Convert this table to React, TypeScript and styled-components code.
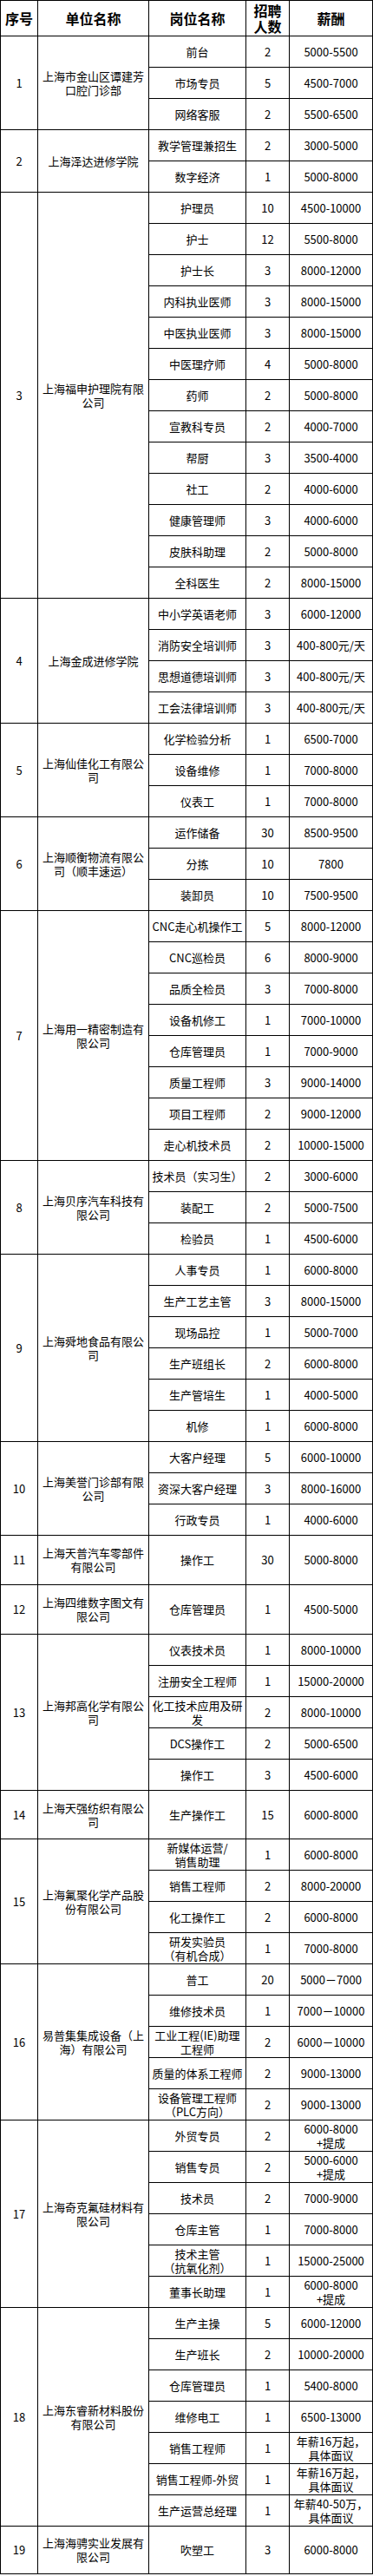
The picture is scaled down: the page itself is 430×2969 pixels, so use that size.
import React from "react";
import styled, { createGlobalStyle } from "styled-components";

type Job = [string, string, string];

type Company = {
  no: number;
  name: string;
  jobs: Job[];
  height?: number;
};

const companies: Company[] = [
  {
    no: 1,
    name: "上海市金山区谭建芳\n口腔门诊部",
    jobs: [
      ["前台", "2", "5000-5500"],
      ["市场专员", "5", "4500-7000"],
      ["网络客服", "2", "5500-6500"],
    ],
  },
  {
    no: 2,
    name: "上海泽达进修学院",
    jobs: [
      ["教学管理兼招生", "2", "3000-5000"],
      ["数字经济", "1", "5000-8000"],
    ],
  },
  {
    no: 3,
    name: "上海福申护理院有限\n公司",
    jobs: [
      ["护理员", "10", "4500-10000"],
      ["护士", "12", "5500-8000"],
      ["护士长", "3", "8000-12000"],
      ["内科执业医师", "3", "8000-15000"],
      ["中医执业医师", "3", "8000-15000"],
      ["中医理疗师", "4", "5000-8000"],
      ["药师", "2", "5000-8000"],
      ["宣教科专员", "2", "4000-7000"],
      ["帮厨", "3", "3500-4000"],
      ["社工", "2", "4000-6000"],
      ["健康管理师", "3", "4000-6000"],
      ["皮肤科助理", "2", "5000-8000"],
      ["全科医生", "2", "8000-15000"],
    ],
  },
  {
    no: 4,
    name: "上海金成进修学院",
    jobs: [
      ["中小学英语老师", "3", "6000-12000"],
      ["消防安全培训师", "3", "400-800元/天"],
      ["思想道德培训师", "3", "400-800元/天"],
      ["工会法律培训师", "3", "400-800元/天"],
    ],
  },
  {
    no: 5,
    name: "上海仙佳化工有限公\n司",
    jobs: [
      ["化学检验分析", "1", "6500-7000"],
      ["设备维修", "1", "7000-8000"],
      ["仪表工", "1", "7000-8000"],
    ],
  },
  {
    no: 6,
    name: "上海顺衡物流有限公\n司（顺丰速运）",
    jobs: [
      ["运作储备", "30", "8500-9500"],
      ["分拣", "10", "7800"],
      ["装卸员", "10", "7500-9500"],
    ],
  },
  {
    no: 7,
    name: "上海用一精密制造有\n限公司",
    jobs: [
      ["CNC走心机操作工", "5", "8000-12000"],
      ["CNC巡检员", "6", "8000-9000"],
      ["品质全检员", "3", "7000-8000"],
      ["设备机修工", "1", "7000-10000"],
      ["仓库管理员", "1", "7000-9000"],
      ["质量工程师", "3", "9000-14000"],
      ["项目工程师", "2", "9000-12000"],
      ["走心机技术员", "2", "10000-15000"],
    ],
  },
  {
    no: 8,
    name: "上海贝序汽车科技有\n限公司",
    jobs: [
      ["技术员（实习生）", "2", "3000-6000"],
      ["装配工", "2", "5000-7500"],
      ["检验员", "1", "4500-6000"],
    ],
  },
  {
    no: 9,
    name: "上海舜地食品有限公\n司",
    jobs: [
      ["人事专员", "1", "6000-8000"],
      ["生产工艺主管", "3", "8000-15000"],
      ["现场品控", "1", "5000-7000"],
      ["生产班组长", "2", "6000-8000"],
      ["生产管培生", "1", "4000-5000"],
      ["机修", "1", "6000-8000"],
    ],
  },
  {
    no: 10,
    name: "上海美誉门诊部有限\n公司",
    jobs: [
      ["大客户经理", "5", "6000-10000"],
      ["资深大客户经理", "3", "8000-16000"],
      ["行政专员", "1", "4000-6000"],
    ],
  },
  {
    no: 11,
    name: "上海天普汽车零部件\n有限公司",
    jobs: [["操作工", "30", "5000-8000"]],
    height: 57,
  },
  {
    no: 12,
    name: "上海四维数字图文有\n限公司",
    jobs: [["仓库管理员", "1", "4500-5000"]],
    height: 57,
  },
  {
    no: 13,
    name: "上海邦高化学有限公\n司",
    jobs: [
      ["仪表技术员", "1", "8000-10000"],
      ["注册安全工程师", "1", "15000-20000"],
      ["化工技术应用及研\n发", "2", "8000-10000"],
      ["DCS操作工", "2", "5000-6500"],
      ["操作工", "3", "4500-6000"],
    ],
  },
  {
    no: 14,
    name: "上海天强纺织有限公\n司",
    jobs: [["生产操作工", "15", "6000-8000"]],
    height: 56,
  },
  {
    no: 15,
    name: "上海氟聚化学产品股\n份有限公司",
    jobs: [
      ["新媒体运营/\n销售助理", "1", "6000-8000"],
      ["销售工程师", "2", "8000-20000"],
      ["化工操作工", "2", "6000-8000"],
      ["研发实验员\n（有机合成）", "1", "7000-8000"],
    ],
  },
  {
    no: 16,
    name: "易普集集成设备（上\n海）有限公司",
    jobs: [
      ["普工", "20", "5000－7000"],
      ["维修技术员", "1", "7000－10000"],
      ["工业工程(IE)助理\n工程师", "2", "6000－10000"],
      ["质量的体系工程师", "2", "9000-13000"],
      ["设备管理工程师\n（PLC方向）", "2", "9000-13000"],
    ],
  },
  {
    no: 17,
    name: "上海奇克氟硅材料有\n限公司",
    jobs: [
      ["外贸专员", "2", "6000-8000\n+提成"],
      ["销售专员", "2", "5000-6000\n+提成"],
      ["技术员", "2", "7000-9000"],
      ["仓库主管", "1", "7000-8000"],
      ["技术主管\n（抗氧化剂）", "1", "15000-25000"],
      ["董事长助理", "1", "6000-8000\n+提成"],
    ],
  },
  {
    no: 18,
    name: "上海东睿新材料股份\n有限公司",
    jobs: [
      ["生产主操", "5", "6000-12000"],
      ["生产班长", "2", "10000-20000"],
      ["仓库管理员", "1", "5400-8000"],
      ["维修电工", "1", "6500-13000"],
      ["销售工程师", "1", "年薪16万起，\n具体面议"],
      ["销售工程师-外贸", "1", "年薪16万起，\n具体面议"],
      ["生产运营总经理", "1", "年薪40-50万，\n具体面议"],
    ],
  },
  {
    no: 19,
    name: "上海海骋实业发展有\n限公司",
    jobs: [["吹塑工", "3", "6000-8000"]],
    height: 55,
  },
];

const GlobalStyle = createGlobalStyle`
  html, body {
    margin: 0;
    padding: 0;
    background: #fff;
  }
  body {
    font-family: "Noto Sans CJK SC", "Noto Sans", sans-serif;
    color: #000;
  }
`;

const Table = styled.table`
  width: 429px;
  table-layout: fixed;
  border-collapse: collapse;
  font-size: 13px;
  line-height: 16px;
`;

const HeadRow = styled.tr`
  height: 41px;
`;

const Row = styled.tr<{ $h?: number }>`
  height: ${(p) => p.$h ?? 36}px;
`;

const HeadCell = styled.th`
  border: 1px solid #000;
  padding: 0;
  font-size: 16px;
  line-height: 18px;
  font-weight: 700;
  text-align: center;
  vertical-align: middle;
  white-space: pre-line;
`;

const Cell = styled.td<{ $pad?: number }>`
  border: 1px solid #000;
  padding: 0 ${(p) => p.$pad ?? 0}px;
  text-align: center;
  vertical-align: middle;
  white-space: pre-line;
  font-weight: 400;
`;

export default function App() {
  return (
    <>
      <GlobalStyle />
      <Table>
        <colgroup>
          <col style={{ width: 43 }} />
          <col style={{ width: 128 }} />
          <col style={{ width: 112 }} />
          <col style={{ width: 50 }} />
          <col style={{ width: 96 }} />
        </colgroup>
        <thead>
          <HeadRow>
            <HeadCell>序号</HeadCell>
            <HeadCell>单位名称</HeadCell>
            <HeadCell>岗位名称</HeadCell>
            <HeadCell>{"招聘\n人数"}</HeadCell>
            <HeadCell>薪酬</HeadCell>
          </HeadRow>
        </thead>
        <tbody>
          {companies.map((c) =>
            c.jobs.map((job, i) => (
              <Row key={`${c.no}-${i}`} $h={c.height}>
                {i === 0 && (
                  <>
                    <Cell rowSpan={c.jobs.length}>{c.no}</Cell>
                    <Cell rowSpan={c.jobs.length} $pad={3}>
                      {c.name}
                    </Cell>
                  </>
                )}
                <Cell>{job[0]}</Cell>
                <Cell>{job[1]}</Cell>
                <Cell>{job[2]}</Cell>
              </Row>
            ))
          )}
        </tbody>
      </Table>
    </>
  );
}
